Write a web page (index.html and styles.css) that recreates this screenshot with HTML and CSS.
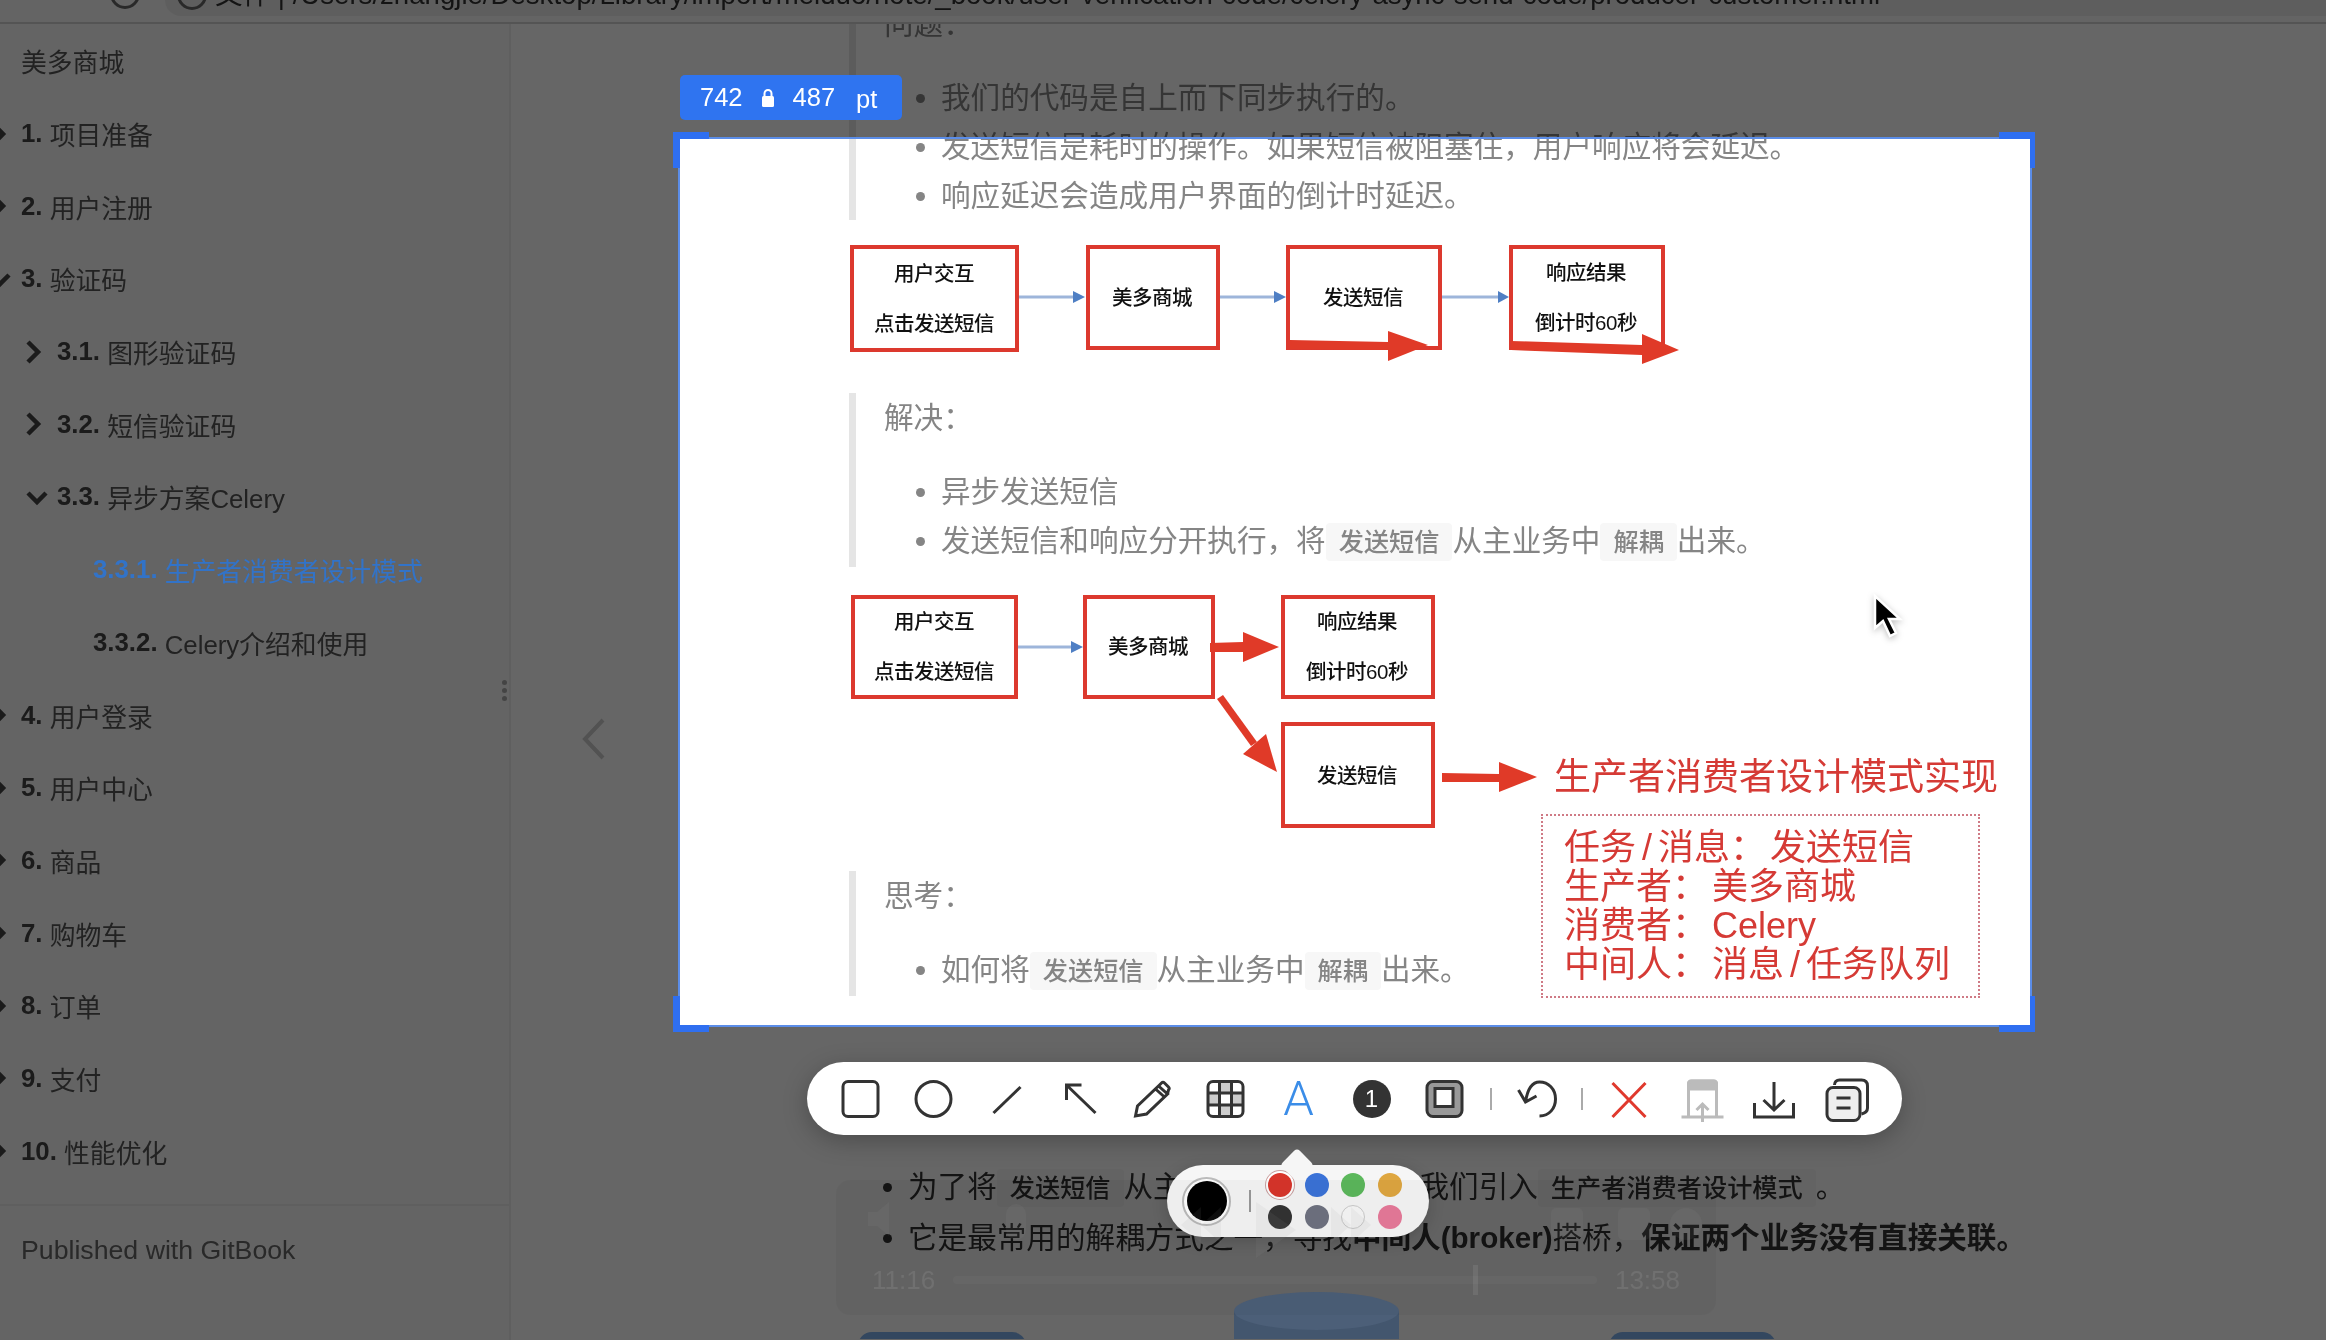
FILE: index.html

```html
<!DOCTYPE html>
<html lang="zh-CN">
<head>
    <meta charset="UTF-8">
    <title>生产者消费者设计模式</title>
    <link rel="stylesheet" href="styles.css">
</head>
<body>
    <div class="screen">
        <div class="browserBar">
            <span class="navRound"></span>
            <div class="addressPill">
                <span class="navRound navRoundSmall"></span>
                <span class="addressText">文件 | /Users/zhangjie/Desktop/Library/import/meiduo/note/_book/user-verification-code/celery-async-send-code/producer-customer.html</span>
            </div>
        </div>

        <div class="book">
            <aside class="sidebar">
                <nav class="toc">
                    <a class="tocRow lvl1 plain">美多商城</a>
                    <a class="tocRow lvl1"><svg class="caret" viewBox="0 0 22 22"><path d="M6 1l10 10L6 21"/></svg><b>1.</b> 项目准备</a>
                    <a class="tocRow lvl1"><svg class="caret" viewBox="0 0 22 22"><path d="M6 1l10 10L6 21"/></svg><b>2.</b> 用户注册</a>
                    <a class="tocRow lvl1"><svg class="caret open" viewBox="0 0 22 22"><path d="M2 7l9 9 9-9"/></svg><b>3.</b> 验证码</a>
                    <a class="tocRow lvl2"><svg class="caret" viewBox="0 0 22 22"><path d="M6 1l10 10L6 21"/></svg><b>3.1.</b> 图形验证码</a>
                    <a class="tocRow lvl2"><svg class="caret" viewBox="0 0 22 22"><path d="M6 1l10 10L6 21"/></svg><b>3.2.</b> 短信验证码</a>
                    <a class="tocRow lvl2"><svg class="caret open" viewBox="0 0 22 22"><path d="M2 7l9 9 9-9"/></svg><b>3.3.</b> 异步方案Celery</a>
                    <a class="tocRow lvl3 active"><b>3.3.1.</b> 生产者消费者设计模式</a>
                    <a class="tocRow lvl3"><b>3.3.2.</b> Celery介绍和使用</a>
                    <a class="tocRow lvl1"><svg class="caret" viewBox="0 0 22 22"><path d="M6 1l10 10L6 21"/></svg><b>4.</b> 用户登录</a>
                    <a class="tocRow lvl1"><svg class="caret" viewBox="0 0 22 22"><path d="M6 1l10 10L6 21"/></svg><b>5.</b> 用户中心</a>
                    <a class="tocRow lvl1"><svg class="caret" viewBox="0 0 22 22"><path d="M6 1l10 10L6 21"/></svg><b>6.</b> 商品</a>
                    <a class="tocRow lvl1"><svg class="caret" viewBox="0 0 22 22"><path d="M6 1l10 10L6 21"/></svg><b>7.</b> 购物车</a>
                    <a class="tocRow lvl1"><svg class="caret" viewBox="0 0 22 22"><path d="M6 1l10 10L6 21"/></svg><b>8.</b> 订单</a>
                    <a class="tocRow lvl1"><svg class="caret" viewBox="0 0 22 22"><path d="M6 1l10 10L6 21"/></svg><b>9.</b> 支付</a>
                    <a class="tocRow lvl1"><svg class="caret" viewBox="0 0 22 22"><path d="M6 1l10 10L6 21"/></svg><b>10.</b> 性能优化</a>
                </nav>
                <div class="tocFooter">Published with GitBook</div>
                <div class="resizeDots"><i></i><i></i><i></i></div>
            </aside>

            <main class="content">
                <svg class="backArrow" viewBox="0 0 26 44"><path d="M22 3L4 22l18 19"/></svg>

                <blockquote class="note">
                    <p>问题&#65306;</p>
                    <ul>
                        <li>我们的代码是自上而下同步执行的。</li>
                        <li>发送短信是耗时的操作。如果短信被阻塞住&#65292;用户响应将会延迟。</li>
                        <li>响应延迟会造成用户界面的倒计时延迟。</li>
                    </ul>
                </blockquote>

                <svg class="flow flowOne" viewBox="849 240 850 125">
                    <g class="boxes">
                        <rect x="852" y="248" width="165" height="103"/>
                        <rect x="1088" y="248" width="130" height="101"/>
                        <rect x="1288" y="248" width="152" height="101"/>
                        <rect x="1511" y="248" width="152" height="101"/>
                    </g>
                    <g class="wire">
                        <path d="M1019 298h55M1220 298h55M1442 298h57"/>
                    </g>
                    <g class="wireHead">
                        <polygon points="1073,292 1085,298 1073,304"/>
                        <polygon points="1274,292 1286,298 1274,304"/>
                        <polygon points="1498,292 1509,298 1498,304"/>
                    </g>
                    <g class="redArrow">
                        <polygon points="1290,341 1388,343 1388,351 1290,350"/>
                        <polygon points="1388,332 1428,346 1388,362"/>
                        <polygon points="1511,342 1642,346 1642,356 1511,351"/>
                        <polygon points="1642,335 1679,351 1642,365"/>
                    </g>
                    <g class="boxText">
                        <text x="934" y="282">用户交互</text>
                        <text x="934" y="332">点击发送短信</text>
                        <text x="1152" y="306">美多商城</text>
                        <text x="1363" y="306">发送短信</text>
                        <text x="1586" y="281">响应结果</text>
                        <text x="1586" y="331">倒计时60秒</text>
                    </g>
                </svg>

                <blockquote class="note">
                    <p>解决&#65306;</p>
                    <ul>
                        <li>异步发送短信</li>
                        <li>发送短信和响应分开执行&#65292;将<code>发送短信</code>从主业务中<code>解耦</code>出来。</li>
                    </ul>
                </blockquote>

                <svg class="flow flowTwo" viewBox="849 590 700 257">
                    <g class="boxes">
                        <rect x="853" y="598" width="163" height="100"/>
                        <rect x="1085" y="598" width="128" height="100"/>
                        <rect x="1283" y="598" width="150" height="100"/>
                        <rect x="1283" y="725" width="150" height="102"/>
                    </g>
                    <g class="wire">
                        <path d="M1018 648h54"/>
                    </g>
                    <g class="wireHead">
                        <polygon points="1071,642 1083,648 1071,654"/>
                    </g>
                    <g class="redArrow">
                        <polygon points="1210,644 1243,643 1243,653 1210,653"/>
                        <polygon points="1243,633 1279,648 1243,663"/>
                        <polygon points="1217,700 1223,696 1257,743 1251,747"/>
                        <polygon points="1266,735 1277,773 1243,755"/>
                        <polygon points="1442,774 1499,775 1499,783 1442,783"/>
                        <polygon points="1499,763 1537,778 1499,793"/>
                    </g>
                    <g class="boxText">
                        <text x="934" y="630">用户交互</text>
                        <text x="934" y="680">点击发送短信</text>
                        <text x="1148" y="655">美多商城</text>
                        <text x="1357" y="630">响应结果</text>
                        <text x="1357" y="680">倒计时60秒</text>
                        <text x="1357" y="784">发送短信</text>
                    </g>
                </svg>

                <blockquote class="note">
                    <p>思考&#65306;</p>
                    <ul>
                        <li>如何将<code>发送短信</code>从主业务中<code>解耦</code>出来。</li>
                    </ul>
                </blockquote>

                <ul class="plainList">
                    <li>为了将<code>发送短信</code>从主业务中解耦出来&#65292;我们引入<code>生产者消费者设计模式</code>。</li>
                    <li>它是最常用的解耦方式之一&#65292;寻找<strong>中间人(broker)</strong>搭桥&#65292;<strong>保证两个业务没有直接关联。</strong></li>
                </ul>

                <svg class="nextFigure" viewBox="849 1290 950 50">
                    <rect class="drum" x="1234" y="1312" width="165" height="40"/>
                    <ellipse class="drumTop" cx="1316.5" cy="1312" rx="82.5" ry="19"/>
                    <rect class="block" x="858" y="1333" width="168" height="30" rx="14"/>
                    <rect class="block" x="1609" y="1333" width="167" height="30" rx="14"/>
                </svg>
            </main>
        </div>

        <!-- capture tool, sits over the page -->
        <div class="selection">
            <i class="handle tl"></i><i class="handle tr"></i><i class="handle bl"></i><i class="handle br"></i>
            <div class="markTitle">生产者消费者设计模式实现</div>
            <div class="markBox">
                <div>任务<span class="slash">/</span>消息&#65306; 发送短信</div>
                <div>生产者&#65306; 美多商城</div>
                <div>消费者&#65306; Celery</div>
                <div>中间人&#65306; 消息<span class="slash">/</span>任务队列</div>
            </div>
        </div>

        <div class="sizeLabel">
            <span>742</span>
            <svg class="lockIcon" viewBox="0 0 14 20"><path class="lockLoop" d="M3.5 9V5.5a3.5 3.5 0 0 1 7 0V9"/><rect x="1" y="8" width="12" height="11" rx="1.5"/></svg>
            <span>487</span>
            <span class="unit">pt</span>
        </div>

        <div class="toolbar">
            <svg class="tool" viewBox="0 0 48 48"><rect x="6.5" y="6.5" width="35" height="35" rx="5"/></svg>
            <svg class="tool" viewBox="0 0 48 48"><circle cx="24" cy="24" r="17.5"/></svg>
            <svg class="tool" viewBox="0 0 48 48"><path d="M11 38L38 12"/></svg>
            <svg class="tool" viewBox="0 0 48 48"><path d="M11 10l29 28M11 25V10h15"/></svg>
            <svg class="tool" viewBox="0 0 48 48"><path d="M7 41l2-10L30 11l9 8-21 20zM27 14l9 8M30 11l3-3c1-1 2-1 3 0l4 4c1 1 1 2 0 3l-1 4"/></svg>
            <svg class="tool" viewBox="0 0 48 48">
                <path class="cell" d="M18 6h12v12H18zM6 18h12v12H6zM30 18h12v12H30zM18 30h12v12H18z"/>
                <rect x="6.5" y="6.5" width="35" height="35" rx="5"/>
                <path d="M18 6v36M30 6v36M6 18h36M6 30h36"/>
            </svg>
            <span class="tool toolLetter">A</span>
            <span class="tool toolNumber"><span>1</span></span>
            <svg class="tool" viewBox="0 0 48 48"><rect class="frameOuter" x="6.5" y="6.5" width="35" height="35" rx="6"/><rect class="frameInner" x="14.5" y="13.5" width="18" height="18"/></svg>
            <i class="toolSep"></i>
            <svg class="tool" viewBox="0 0 48 48"><path d="M26 41C36 41 42 33 42 24C42 14 35 7 26 7C19 7 14 14 12 27M5 15l7 12 11-6"/></svg>
            <i class="toolSep toolSepTight"></i>
            <svg class="tool toolClose" viewBox="0 0 48 48"><path d="M9 8l33 34M42 8L9 42"/></svg>
            <svg class="tool toolPin" viewBox="0 0 48 48"><path class="pinBand" d="M12 14V9c0-2 1-3 3-3h22c2 0 3 1 3 3v5z"/><path d="M12 42V9c0-2 1-3 3-3h22c2 0 3 1 3 3v33M5 42h42M26 47V30M20 35l6-6 6 6"/></svg>
            <svg class="tool" viewBox="0 0 48 48"><path d="M5 28v14h39V28M24.5 7v28M14 25l10.5 10L35 25"/></svg>
            <svg class="tool" viewBox="0 0 48 48"><path d="M12 10c0-3 2-5 5-5h22c4 0 6 2 6 6v22c0 3-2 5-6 6"/><rect class="copyFront" x="4.5" y="12.5" width="33" height="33" rx="6"/><path d="M14 23h14M14 33h14"/></svg>
        </div>

        <div class="colorPop">
            <div class="currentColor"><i></i></div>
            <i class="popSep"></i>
            <div class="swatches">
                <i class="swatch red"></i><i class="swatch blue"></i><i class="swatch green"></i><i class="swatch orange"></i>
                <i class="swatch dark"></i><i class="swatch gray"></i><i class="swatch white"></i><i class="swatch pink"></i>
            </div>
        </div>

        <!-- video player controls, nearly faded out -->
        <div class="player">
            <svg class="playerIcons" viewBox="0 0 880 135">
                <path d="M32 32h9l12-10v34L41 46h-9z"/>
                <rect x="170" y="24" width="20" height="36" rx="10"/>
                <path d="M345 45l20-18v36zM365 45l20-18v36zM420 22l40 28-40 28zM515 45l-20-18v36zM535 45l-20-18v36z"/>
                <rect x="715" y="28" width="32" height="30" rx="5"/>
                <rect x="782" y="28" width="32" height="32" rx="5"/>
                <circle cx="850" cy="44" r="16"/>
            </svg>
            <div class="playerRow">
                <span>11:16</span>
                <div class="playerTrack"><i class="playerKnob"></i></div>
                <span>13:58</span>
            </div>
        </div>

        <svg class="cursor" viewBox="0 0 45 52"><path d="M10 6v32l8-7 7 15 6-3-7-14h11z"/></svg>
    </div>
</body>
</html>
```

FILE: styles.css

```css
html, body {
    margin: 0;
    background-color: #666;
}
body {
    font-family: "Liberation Sans", "Noto Sans CJK SC", sans-serif;
}
.screen {
    position: relative;
    width: 2326px;
    height: 1340px;
    overflow: hidden;
    background-color: white;
    filter: blur(0.5px);
}

/* browser chrome, cut off at the top of the frame */
.browserBar {
    display: flex;
    align-items: flex-start;
    height: 24px;
    overflow: hidden;
    box-sizing: border-box;
    border-bottom: 2px solid #d2d2d2;
    background-color: #f9f9f9;
}
.navRound {
    flex: none;
    width: 24px;
    height: 24px;
    margin: -21px 0 0 110px;
    border: 3px solid #666;
    border-radius: 50%;
}
.navRoundSmall {
    margin: -20px 0 0 12px;
}
.addressPill {
    display: flex;
    flex: 1;
    height: 16px;
    margin-left: 25px;
    overflow: hidden;
    border-bottom-left-radius: 22px;
    background-color: #ececec;
}
.addressText {
    margin: -20px 0 0 8px;
    font-size: 27.6px;
    line-height: 30px;
    white-space: nowrap;
    color: #333;
}

.book {
    display: flex;
    height: 1316px;
    overflow: hidden;
}

/* left table of contents */
.sidebar {
    position: relative;
    display: flex;
    flex-direction: column;
    flex: none;
    box-sizing: border-box;
    width: 511px;
    border-right: 2px solid #ededed;
    background-color: #fafafa;
}
.toc {
    flex: 1;
    padding-top: 0.5px;
}
.tocRow {
    display: flex;
    align-items: center;
    height: 72.7px;
    font-size: 25.8px;
    white-space: pre;
    color: #555;
}
.tocRow b {
    color: #444;
}
.lvl1 {
    padding-left: 21px;
}
.lvl2 {
    padding-left: 57px;
}
.lvl3 {
    padding-left: 93px;
}
/* sits over the dimming so it can stay properly blue */
.active {
    position: relative;
    z-index: 1;
}
.active, .active b {
    color: #3273c8;
}
.caret {
    flex: none;
    width: 22px;
    height: 22px;
    overflow: visible;
    fill: none;
    stroke: #444;
    stroke-width: 4.5;
}
.lvl1 .caret {
    margin: 0 12px 0 -34px;
}
.lvl1 .caret.open {
    margin: 0 10px 0 -32px;
}
.lvl2 .caret {
    margin: 0 13px 0 -35px;
}
.lvl2 .caret.open {
    margin: 0 9px 0 -31px;
}
.tocFooter {
    box-sizing: border-box;
    height: 136px;
    padding: 26px 0 0 21px;
    border-top: 2px solid #ededed;
    font-size: 26.7px;
    line-height: 36px;
    color: #666;
}
.resizeDots {
    position: absolute;
    top: 656px;
    right: 2px;
    display: grid;
    gap: 3px;
}
.resizeDots i {
    width: 5px;
    height: 5px;
    border-radius: 50%;
    background-color: #aaa;
}

/* document */
.content {
    position: relative;
    flex: 1;
    overflow: hidden;
    margin-top: -25.5px;
    padding-left: 338px;
    font-size: 29.6px;
    line-height: 49px;
    color: #333;
}
.backArrow {
    position: absolute;
    top: 718.5px;
    left: 70px;
    width: 26px;
    height: 44px;
    fill: none;
    stroke: #ccc;
    stroke-width: 4;
}
.note {
    margin: 0;
    padding: 0 29px 0 28px;
    border-left: 7px solid #e5e5e5;
    color: #858585;
}
.note p {
    margin: 0 0 25px;
}
.note ul {
    margin: 0;
    padding-left: 57px;
}
code {
    padding: 5px 13px;
    border-radius: 4px;
    background-color: #f7f7f7;
    font-family: "Liberation Sans", "Noto Sans CJK SC", sans-serif;
    font-size: 25.2px;
    font-weight: 500;
}
.flow {
    display: block;
    overflow: visible;
}
.flowOne {
    width: 850px;
    height: 125px;
    margin: 19.5px 0 28.5px;
}
.flowTwo {
    width: 700px;
    height: 257px;
    margin: 22px 0 25.5px;
}
.boxes {
    fill: white;
    stroke: #dc392e;
    stroke-width: 4;
}
.wire {
    fill: none;
    stroke: #9db5da;
    stroke-width: 3;
}
.wireHead {
    fill: #4f7fc4;
}
.redArrow {
    fill: #e03a28;
}
.boxText {
    font-size: 20.5px;
    font-weight: 500;
    letter-spacing: -0.5px;
    text-anchor: middle;
    fill: #111;
}
.plainList {
    margin: 166px 0 0;
    padding-left: 59px;
}
.plainList li {
    height: 51px;
}
.plainList strong {
    font-weight: 700;
}
/* also over the dimming, these shapes keep their slate blue */
.nextFigure {
    position: relative;
    z-index: 1;
    display: block;
    width: 950px;
    height: 50px;
    margin-top: 25px;
}
.drum {
    fill: #43566e;
}
.drumTop {
    fill: #4c5f78;
}
.block {
    fill: #33475f;
}

/* capture tool */
.selection {
    position: absolute;
    top: 137px;
    left: 678px;
    box-sizing: border-box;
    width: 1354px;
    height: 890px;
    border: 2px solid #5b8de8;
    box-shadow: 0 0 0 4000px rgba(0, 0, 0, 0.6);
}
.handle {
    position: absolute;
    box-sizing: border-box;
    width: 36px;
    height: 36px;
    border: 0 solid #2f6ff0;
}
.tl {
    top: -7px;
    left: -7px;
    border-width: 7px 0 0 7px;
}
.tr {
    top: -7px;
    right: -5px;
    border-width: 7px 5px 0 0;
}
.bl {
    bottom: -7px;
    left: -7px;
    border-width: 0 0 7px 7px;
}
.br {
    right: -5px;
    bottom: -7px;
    border-width: 0 5px 7px 0;
}
.markTitle {
    position: absolute;
    top: 615px;
    left: 874px;
    font-size: 37px;
    line-height: 48px;
    white-space: nowrap;
    color: #d53a35;
}
.markBox {
    position: absolute;
    top: 675px;
    left: 861px;
    box-sizing: border-box;
    width: 439px;
    height: 184px;
    padding: 12px 0 0 21px;
    border: 2px dotted #cf7a85;
    font-size: 36px;
    line-height: 39px;
    word-spacing: -6px;
    white-space: nowrap;
    color: #d53a35;
}
.slash {
    margin: 0 6px;
}
.sizeLabel {
    position: absolute;
    top: 75px;
    left: 680px;
    display: flex;
    align-items: center;
    box-sizing: border-box;
    width: 222px;
    height: 45px;
    padding-left: 20px;
    border-radius: 5px;
    background-color: #2f74f0;
    font-size: 25.5px;
    color: white;
}
.lockIcon {
    width: 14px;
    height: 20px;
    margin: 0 18px;
    fill: white;
}
.lockLoop {
    fill: none;
    stroke: white;
    stroke-width: 2;
}
.unit {
    margin: 4px 0 0 21px;
}

.toolbar {
    position: absolute;
    top: 1062px;
    left: 807px;
    display: flex;
    align-items: center;
    box-sizing: border-box;
    width: 1095px;
    height: 73px;
    padding: 0 16px 0 17px;
    border-radius: 37px;
    background-color: white;
    box-shadow: 0 6px 24px rgba(0, 0, 0, 0.25);
}
svg.tool {
    flex: none;
    width: 48px;
    height: 48px;
    padding: 0 12.5px;
    overflow: visible;
    fill: none;
    stroke: #333;
    stroke-width: 3;
}
.cell {
    fill: #ccc;
    stroke: none;
}
.frameOuter {
    fill: #999;
}
.frameInner {
    fill: white;
}
svg.toolClose {
    stroke: #e0392d;
}
svg.toolPin {
    stroke: #bbb;
}
.pinBand {
    fill: #bbb;
}
.copyFront {
    fill: #eee;
}
.toolLetter {
    flex: none;
    width: 73px;
    font-family: Roboto, sans-serif;
    font-size: 49px;
    font-weight: 300;
    line-height: 48px;
    text-align: center;
    color: #3b8de8;
}
.toolNumber {
    display: flex;
    flex: none;
    justify-content: center;
    width: 73px;
}
.toolNumber span {
    width: 38px;
    height: 38px;
    border-radius: 50%;
    background-color: #333;
    font-size: 24px;
    line-height: 38px;
    text-align: center;
    color: white;
}
.toolSep {
    flex: none;
    width: 2px;
    height: 22px;
    margin: 0 9px;
    background-color: #aaa;
}
.toolSepTight {
    margin: 0 8px 0 7px;
}

.colorPop {
    position: absolute;
    top: 1165px;
    left: 1167px;
    display: flex;
    align-items: center;
    box-sizing: border-box;
    width: 262px;
    height: 72px;
    padding-left: 15px;
    border-radius: 36px;
    background-color: #f6f6f6;
    box-shadow: 0 4px 16px rgba(0, 0, 0, 0.2);
}
.colorPop::before {
    content: "";
    position: absolute;
    top: -12px;
    left: 118px;
    width: 24px;
    height: 24px;
    border-radius: 4px;
    background-color: #f6f6f6;
    transform: rotate(45deg);
}
.currentColor {
    position: relative;
    display: flex;
    align-items: center;
    justify-content: center;
    box-sizing: border-box;
    width: 49px;
    height: 49px;
    border: 2px solid #bbb;
    border-radius: 50%;
    background-color: white;
}
.currentColor i {
    width: 40px;
    height: 40px;
    border-radius: 50%;
    background-color: black;
}
.popSep {
    width: 2px;
    height: 22px;
    margin: 0 17px 0 18px;
    background-color: #999;
}
.swatches {
    display: grid;
    grid-template-columns: repeat(4, 24px);
    gap: 8px 12.5px;
}
.swatch {
    width: 24px;
    height: 24px;
    border-radius: 50%;
}
.red {
    background-color: #d9352b;
    box-shadow: 0 0 0 2px white, 0 0 0 3px #c9a0a0;
}
.blue {
    background-color: #3b73d8;
}
.green {
    background-color: #5cb85c;
}
.orange {
    background-color: #dfa740;
}
.dark {
    background-color: #333;
}
.gray {
    background-color: #6f7280;
}
.white {
    box-sizing: border-box;
    border: 1px solid #ccc;
    background-color: #f8f8f8;
}
.pink {
    background-color: #e87a9a;
}

.player {
    position: absolute;
    z-index: 1;
    top: 1180px;
    left: 836px;
    box-sizing: border-box;
    width: 880px;
    height: 135px;
    border-radius: 14px;
    background-color: rgba(0, 0, 0, 0.03);
}
.playerIcons {
    position: absolute;
    top: 0;
    left: 0;
    width: 880px;
    height: 135px;
    fill: rgba(150, 150, 150, 0.09);
}
.playerRow {
    position: absolute;
    right: 36px;
    bottom: 15px;
    left: 36px;
    display: flex;
    align-items: center;
    gap: 18px;
    font-size: 26px;
    line-height: 40px;
    color: rgba(255, 255, 255, 0.09);
}
.playerTrack {
    position: relative;
    flex: 1;
    height: 8px;
    border-radius: 4px;
    background-color: rgba(255, 255, 255, 0.03);
}
.playerKnob {
    position: absolute;
    top: -11px;
    left: 520px;
    width: 5px;
    height: 30px;
    background-color: rgba(255, 255, 255, 0.08);
}

.cursor {
    position: absolute;
    z-index: 1;
    top: 590px;
    left: 1865px;
    width: 45px;
    height: 52px;
    fill: black;
    stroke: white;
    stroke-width: 2.5;
    filter: drop-shadow(0 2px 3px rgba(0, 0, 0, 0.25));
}
```
